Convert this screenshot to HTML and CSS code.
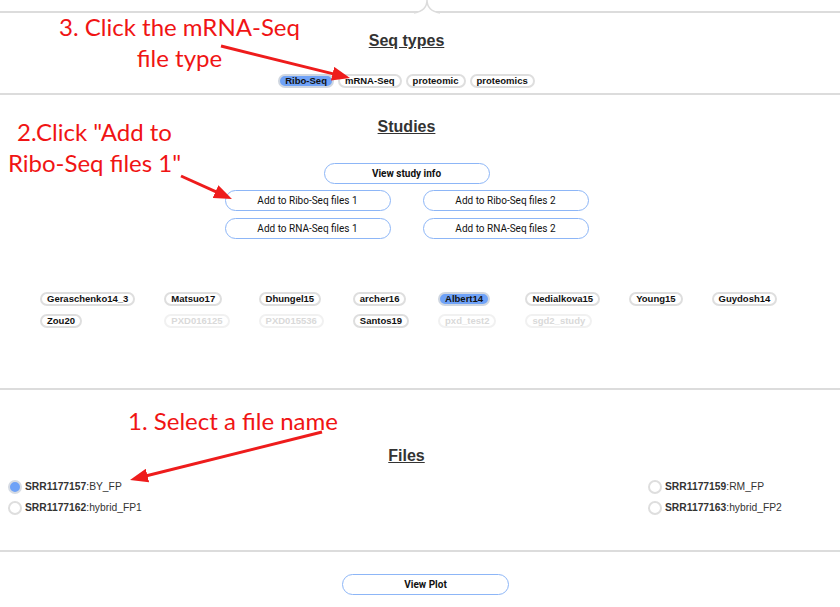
FILE: index.html
```html
<!DOCTYPE html>
<html>
<head>
<meta charset="utf-8">
<link rel="stylesheet" href="styles.css">
</head>
<body>
<div class="page">
  <svg class="notch" width="40" height="14" viewBox="0 0 40 14"><path d="M0,13 Q13,11 13,0 Q13,11 26,13" fill="#fff" stroke="#dcdcdc" stroke-width="1.5"/></svg>

  <section class="sec sec-seq">
    <h2 class="title">Seq types</h2>
    <div class="pill-row">
      <span class="pill sel">Ribo-Seq</span>
      <span class="pill">mRNA-Seq</span>
      <span class="pill">proteomic</span>
      <span class="pill">proteomics</span>
    </div>
  </section>

  <section class="sec sec-studies">
    <h2 class="title">Studies</h2>
    <div class="btn-center"><button class="btn bold">View study info</button></div>
    <div class="btn-grid">
      <button class="btn">Add to Ribo-Seq files 1</button>
      <button class="btn">Add to Ribo-Seq files 2</button>
      <button class="btn">Add to RNA-Seq files 1</button>
      <button class="btn">Add to RNA-Seq files 2</button>
    </div>
    <div class="study-grid">
      <span class="pill">Geraschenko14_3</span>
      <span class="pill">Matsuo17</span>
      <span class="pill">Dhungel15</span>
      <span class="pill">archer16</span>
      <span class="pill sel">Albert14</span>
      <span class="pill">Nedialkova15</span>
      <span class="pill">Young15</span>
      <span class="pill">Guydosh14</span>
      <span class="pill">Zou20</span>
      <span class="pill off">PXD016125</span>
      <span class="pill off">PXD015536</span>
      <span class="pill">Santos19</span>
      <span class="pill off">pxd_test2</span>
      <span class="pill off">sgd2_study</span>
    </div>
  </section>

  <section class="sec sec-files">
    <h2 class="title">Files</h2>
    <div class="file-grid">
      <label class="radio"><span class="dot on"></span><b>SRR1177157</b>:BY_FP</label>
      <label class="radio"><span class="dot"></span><b>SRR1177159</b>:RM_FP</label>
      <label class="radio"><span class="dot"></span><b>SRR1177162</b>:hybrid_FP1</label>
      <label class="radio"><span class="dot"></span><b>SRR1177163</b>:hybrid_FP2</label>
    </div>
  </section>

  <section class="sec sec-plot">
    <button class="btn bold plot">View Plot</button>
  </section>

  <div class="note note3">3. Click the mRNA-Seq<br>file type</div>
  <div class="note note2">2.Click "Add to<br>Ribo-Seq files 1"</div>
  <div class="note note1">1. Select a file name</div>

  <svg class="arrows" width="840" height="607" viewBox="0 0 840 607">
    <defs>
      <marker id="ah" markerUnits="userSpaceOnUse" markerWidth="18" markerHeight="14" refX="5" refY="7" orient="auto">
        <path d="M0,0 L18,7 L0,14 Z" fill="#ee1c1c"/>
      </marker>
    </defs>
    <line x1="221" y1="46" x2="337.4" y2="74.9" stroke="#ee1c1c" stroke-width="3" marker-end="url(#ah)"/>
    <line x1="181" y1="176" x2="220.1" y2="193.6" stroke="#ee1c1c" stroke-width="3" marker-end="url(#ah)"/>
    <line x1="322" y1="432" x2="142.6" y2="476.8" stroke="#ee1c1c" stroke-width="3" marker-end="url(#ah)"/>
  </svg>
</div>
</body>
</html>
```

FILE: styles.css
```css
* { box-sizing: border-box; }
html, body { margin: 0; padding: 0; background: #fff; }
.page {
  position: relative;
  width: 840px;
  height: 607px;
  overflow: hidden;
  padding-top: 11px;
  font-family: "Liberation Sans", Arial, sans-serif;
}
.notch { position: absolute; left: 414px; top: 0; }
.sec {
  border-top: 2px solid #dcdcdc;
  padding-right: 27px;
}
.title {
  margin: 0;
  text-align: center;
  font-size: 16px;
  line-height: 18px;
  font-weight: bold;
  color: #333;
  text-decoration: underline;
}
.sec-seq { height: 82px; padding-top: 19px; }
.pill-row {
  margin-top: 24px;
  display: flex;
  justify-content: center;
  gap: 4px;
}
.pill {
  display: inline-block;
  height: 14px;
  line-height: 10px;
  padding: 0 5px;
  border: 2px solid #dedede;
  border-radius: 8px;
  background: #fff;
  font-size: 9.5px;
  font-weight: bold;
  color: #111;
  white-space: nowrap;
}
.pill.sel { background: #6fa2f7; border-color: #cfd6e0; }
.pill.off { color: #d9d9d9; border-color: #f1f1f1; }

.sec-studies { height: 295px; padding-top: 23px; }
.btn-center { display: flex; justify-content: center; margin-top: 27px; }
.btn {
  height: 21px;
  width: 166px;
  border: 1px solid #8db6f7;
  border-radius: 11px;
  background: #fff;
  font-family: Roboto, "Liberation Sans", sans-serif;
  font-size: 10px;
  color: #111;
  padding: 0;
}
.btn.bold { font-weight: bold; }
.btn-grid {
  margin-top: 6px;
  display: grid;
  grid-template-columns: 166px 166px;
  column-gap: 32px;
  row-gap: 7px;
  justify-content: center;
}
.study-grid {
  margin-top: 53px;
  padding-left: 40px;
  display: grid;
  grid-template-columns: repeat(8, auto);
  justify-content: start;
  justify-items: start;
  column-gap: 29px;
  row-gap: 8px;
}

.sec-files { height: 162px; padding-top: 57px; }
.file-grid {
  margin-top: 15px;
  padding-left: 8px;
  display: grid;
  grid-template-columns: 640px auto;
  row-gap: 8px;
}
.radio {
  display: flex;
  align-items: center;
  height: 13px;
  font-size: 10.3px;
  color: #333;
}
.radio b { font-weight: bold; }
.dot {
  width: 14px;
  height: 14px;
  border-radius: 50%;
  border: 2px solid #dedede;
  background: #fff;
  margin-right: 3px;
  flex: none;
}
.dot.on { background: #6fa2f7; border-color: #d6dbe3; }

.sec-plot { padding-top: 22px; padding-right: 0; display: flex; justify-content: center; }
.plot { width: 167px; margin-left: 11px; }

.note {
  position: absolute;
  color: #f01414;
  font-family: Lato, "Open Sans", sans-serif;
  font-size: 24px;
  line-height: 31px;
  text-align: center;
  white-space: nowrap;
}
.note3 { left: 42px; top: 11px; width: 275px; }
.note2 { left: -3px; top: 116px; width: 195px; }
.note1 { left: 108px; top: 405px; width: 250px; }
.arrows { position: absolute; left: 0; top: 0; pointer-events: none; }
```
